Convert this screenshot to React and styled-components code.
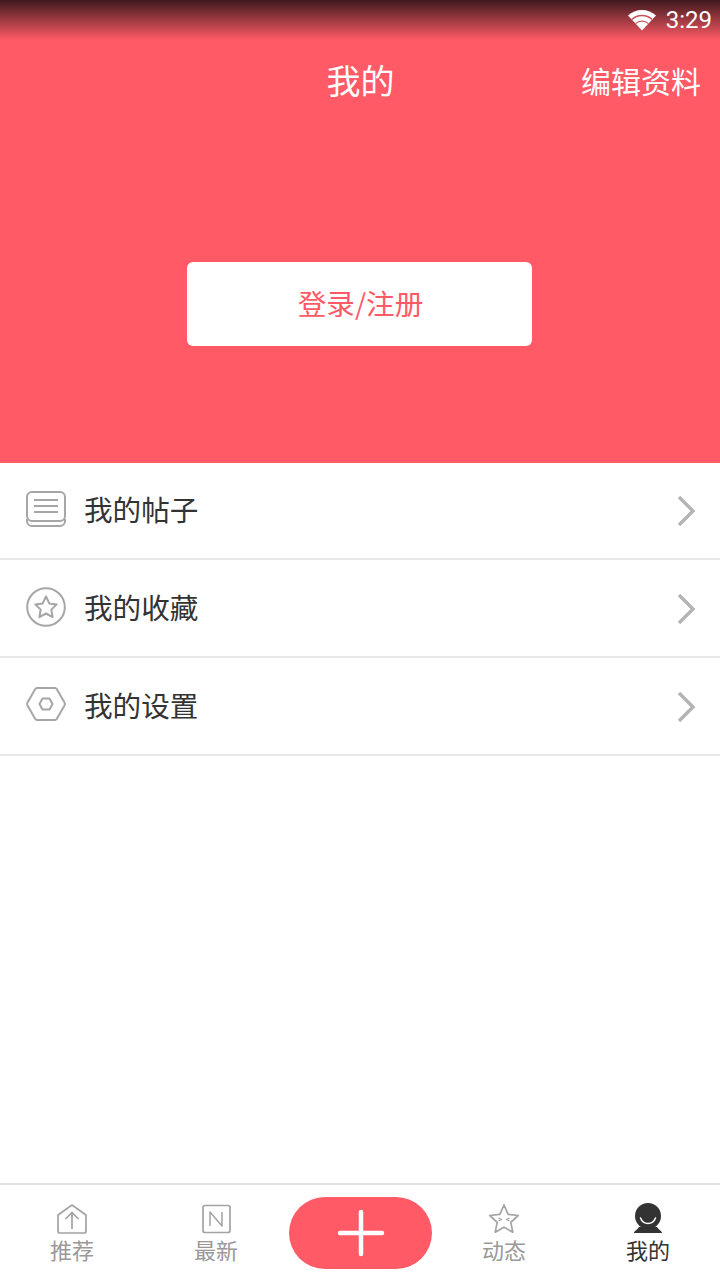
import React from "react";
import styled, { createGlobalStyle } from "styled-components";

const GlobalStyle = createGlobalStyle`
    html, body {
        margin: 0;
        padding: 0;
        background: #fff;
    }
    * {
        box-sizing: border-box;
    }
`;

const Page = styled.div`
    width: 720px;
    height: 1280px;
    display: flex;
    flex-direction: column;
    background: #fff;
    font-family: "Noto Sans CJK SC", "Noto Sans", sans-serif;
    overflow: hidden;
`;

const Header = styled.header`
    height: 463px;
    background: #ff5a65;
    display: flex;
    flex-direction: column;
`;

const StatusBar = styled.div`
    height: 40px;
    display: flex;
    align-items: center;
    justify-content: flex-end;
    gap: 9px;
    padding-right: 8px;
    background: linear-gradient(to bottom, rgba(30, 15, 18, 0.86), rgba(255, 90, 101, 0));
    color: #fff;
    font-family: Roboto, sans-serif;
    font-size: 24px;
`;

const TitleBar = styled.div`
    height: 82px;
    display: grid;
    grid-template-columns: 1fr auto 1fr;
    align-items: center;
    padding: 0 19px 2px 20px;
    color: #fff;
`;

const Title = styled.div`
    grid-column: 2;
    font-size: 34px;
    line-height: 44px;
`;

const EditLink = styled.div`
    justify-self: end;
    font-size: 30px;
    line-height: 40px;
`;

const LoginArea = styled.div`
    flex: 1;
    display: flex;
    justify-content: center;
    padding: 140px 1px 0 0;
`;

const LoginButton = styled.div`
    width: 345px;
    height: 84px;
    padding-left: 2px;
    background: #fff;
    border-radius: 6px;
    color: #ff5a65;
    font-size: 28.6px;
    line-height: 82px;
    display: flex;
    justify-content: center;
`;

const Menu = styled.div`
    flex: 1;
`;

const Row = styled.div`
    height: ${(props) => props.$height}px;
    display: flex;
    align-items: center;
    padding: 0 24px 2px 25px;
    border-bottom: 2px solid #e8e8e8;
    color: #333;
    font-size: 28.6px;
`;

const RowIcon = styled.svg`
    width: 42px;
    height: 42px;
    margin-right: 17px;
    fill: none;
    stroke: #a6a6a6;
    stroke-width: 2;
`;

const RowLabel = styled.span`
    flex: 1;
    margin-top: -2px;
`;

const Chevron = styled.svg`
    width: 20px;
    height: 32px;
    margin-top: 3px;
    fill: none;
    stroke: #b4b4b4;
    stroke-width: 3.4;
`;

const TabBar = styled.nav`
    height: 97px;
    border-top: 2px solid #e0e0e0;
    display: grid;
    grid-template-columns: repeat(5, 144px);
    background: #fff;
`;

const Tab = styled.div`
    display: flex;
    flex-direction: column;
    align-items: center;
    padding-top: 18px;
    color: ${(props) => (props.$active ? "#333" : "#999")};
    font-size: 22px;
    line-height: 30px;
`;

const TabIcon = styled.svg`
    width: 32px;
    height: 32px;
    margin-bottom: -1px;
    fill: none;
    stroke: #a3a3a3;
    stroke-width: 1.7;
    stroke-linejoin: round;
`;

const AddCell = styled.div`
    display: flex;
    justify-content: center;
    padding-top: 12px;
`;

const AddButton = styled.div`
    width: 143px;
    height: 72px;
    border-radius: 36px;
    background: #ff5a65;
    display: flex;
    align-items: center;
    justify-content: center;
    padding-left: 2px;
`;

function WifiIcon() {
    return (
        <svg width="30" height="22" viewBox="0 0 30 22">
            <path d="M15 21.500 1 6.500A20.500 20.500 0 0 1 29 6.500Z" fill="#fff" />
            <g fill="none" stroke="#c9505a" strokeWidth="1.300">
                <path d="M4.800 10.500A15 15 0 0 1 25.200 10.500" />
                <path d="M8.500 14.600A9.500 9.500 0 0 1 21.500 14.600" />
            </g>
        </svg>
    );
}

const menuItems = [
    {
        label: "我的帖子",
        height: 97,
        icon: (
            <>
                <rect x="2" y="3" width="38" height="29" rx="5" />
                <path d="M2 30v2a5 5 0 0 0 5 5h28a5 5 0 0 0 5-5v-2" />
                <path d="M9 11h24M9 17h24M9 23h24" />
            </>
        ),
    },
    {
        label: "我的收藏",
        height: 98,
        icon: (
            <>
                <circle cx="21" cy="21" r="18.800" />
                <path d="M21 10.500l3.300 6.900 7.400 1-5.400 5.200 1.300 7.500-6.600-3.600-6.600 3.600 1.300-7.500-5.400-5.200 7.400-1z" strokeLinejoin="round" />
            </>
        ),
    },
    {
        label: "我的设置",
        height: 98,
        icon: (
            <>
                <path d="M12 4h18a2 2 0 0 1 1.700 1l7.800 13.500a3 3 0 0 1 0 3L31.700 35a2 2 0 0 1-1.700 1H12a2 2 0 0 1-1.700-1L2.500 21.500a3 3 0 0 1 0-3L10.300 5A2 2 0 0 1 12 4z" />
                <path d="M17.500 14.500h7l3 5.500-3 5.500h-7l-3-5.500z" strokeLinejoin="round" />
            </>
        ),
    },
];

export default function App() {
    return (
        <Page>
            <GlobalStyle />
            <Header>
                <StatusBar>
                    <WifiIcon />
                    <span>3:29</span>
                </StatusBar>
                <TitleBar>
                    <Title>我的</Title>
                    <EditLink>编辑资料</EditLink>
                </TitleBar>
                <LoginArea>
                    <LoginButton>登录/注册</LoginButton>
                </LoginArea>
            </Header>

            <Menu>
                {menuItems.map((item) => (
                    <Row key={item.label} $height={item.height}>
                        <RowIcon viewBox="0 0 42 42">{item.icon}</RowIcon>
                        <RowLabel>{item.label}</RowLabel>
                        <Chevron viewBox="0 0 20 32">
                            <path d="M3 2l14 14L3 30" />
                        </Chevron>
                    </Row>
                ))}
            </Menu>

            <TabBar>
                <Tab>
                    <TabIcon viewBox="0 0 32 32">
                        <path d="M16 2 L30 12 V28a2 2 0 0 1-2 2H4a2 2 0 0 1-2-2V12Z" />
                        <path d="M16 26V10M9.500 16 16 9.500 22.500 16" />
                    </TabIcon>
                    推荐
                </Tab>
                <Tab>
                    <TabIcon viewBox="0 0 32 32">
                        <rect x="3" y="2.500" width="27" height="27" rx="2" />
                        <path d="M10 23V9l12 14V9" strokeWidth="1.500" />
                    </TabIcon>
                    最新
                </Tab>
                <AddCell>
                    <AddButton>
                        <svg width="48" height="48" viewBox="0 0 48 48">
                            <path d="M24 3v42M3 24h42" stroke="#fff" strokeWidth="4.500" strokeLinecap="round" fill="none" />
                        </svg>
                    </AddButton>
                </AddCell>
                <Tab>
                    <TabIcon viewBox="0 0 32 32">
                        <path d="M16 2l4.200 9.300 10 1.200-7.400 6.800 2 9.900L16 24.200l-8.800 5 2-9.900-7.400-6.800 10-1.200z" />
                        <path d="M10.500 15l3 1.500-3 1.500M21.500 15l-3 1.500 3 1.500" strokeWidth="1.200" />
                    </TabIcon>
                    动态
                </Tab>
                <Tab $active>
                    <TabIcon viewBox="0 0 32 32">
                        <path d="M2 30c0-2 3-3 5-6h18c2 3 5 4 5 6z" fill="#333" stroke="none" />
                        <circle cx="16" cy="13" r="13" fill="#333" stroke="none" />
                        <path d="M8.500 15c1.500 4 4.500 5.500 7.500 5.500s6-1.500 7.500-5.500" stroke="#fff" strokeWidth="1.500" strokeLinecap="round" />
                    </TabIcon>
                    我的
                </Tab>
            </TabBar>
        </Page>
    );
}
